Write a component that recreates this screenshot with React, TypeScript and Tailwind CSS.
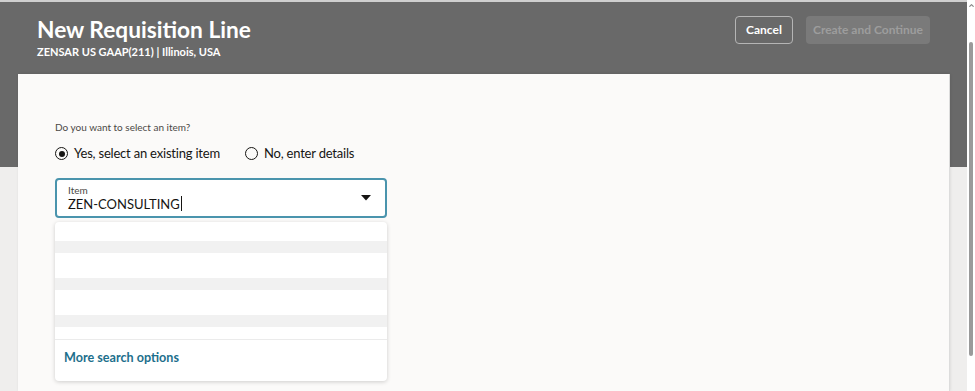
import { ChevronUp } from 'lucide-react';

const font = { fontFamily: 'Lato, "Noto Sans", sans-serif' };

const Radio = ({ checked, label }: { checked?: boolean; label: string }) => (
  <label className="flex items-center gap-[6px] text-[13px] tracking-[-0.2px] text-[#161513]">
    <span className="w-[13px] h-[13px] rounded-full border-[1.5px] border-[#161513] flex items-center justify-center">
      {checked && <span className="w-[6px] h-[6px] rounded-full bg-[#161513]" />}
    </span>
    {label}
  </label>
);

const App = () => {
  return (
    <div className="w-[975px] h-[391px] overflow-hidden flex bg-white" style={font}>
      <div className="flex-1 flex flex-col border-t-2 border-[#cfcfcf] bg-[#efeeed]">
        {/* Page header */}
        <div className="h-[165px] bg-[#696969] flex justify-between px-[37px] pt-[15px] shrink-0">
          <div className="text-white">
            <h1 className="text-[22.7px] font-bold leading-[26px]">New Requisition Line</h1>
            <p className="text-[11px] font-bold leading-[16px] mt-[1px]">ZENSAR US GAAP(211) | Illinois, USA</p>
          </div>
          <div className="flex items-start gap-[13px] mt-[-1px]">
            <button className="h-[28px] w-[58px] rounded-[4px] border border-[#b5b5b5] text-white text-[12px] font-bold">
              Cancel
            </button>
            <button className="h-[28px] w-[124px] rounded-[4px] bg-[#7a7a7a] text-[#9d9d9d] text-[12px] font-bold">
              Create and Continue
            </button>
          </div>
        </div>

        {/* Card */}
        <div className="flex-1 flex -mt-[93px]">
          <div className="ml-[18px] w-[931px] bg-[#fbfaf9] pl-[37px] pt-[46px] shadow-[1px_0_3px_rgba(0,0,0,0.12)]">
            <p className="text-[10px] text-[#4b4946] leading-[14px]">Do you want to select an item?</p>
            <div className="flex gap-[25px] mt-[10px]">
              <Radio checked label="Yes, select an existing item" />
              <Radio label="No, enter details" />
            </div>

            <div className="mt-[14px] w-[332px] h-[40px] rounded-[4px] border-2 border-[#4a94ad] bg-white flex items-center pl-[11px] pr-[14px]">
              <div className="flex-1 flex flex-col">
                <span className="text-[10px] leading-[12px] text-[#4b4946]">Item</span>
                <span className="text-[13px] leading-[16px] text-[#161513] flex items-center">
                  ZEN-CONSULTING
                  <span className="w-px h-[15px] bg-[#161513] ml-[1px]" />
                </span>
              </div>
              <svg width="10" height="6" viewBox="0 0 10 6">
                <path d="M0 0 L10 0 L5 5.5 Z" fill="#161513" />
              </svg>
            </div>

            <div className="mt-[4px] w-[332px] bg-white rounded-[4px] shadow-[0_1px_4px_rgba(0,0,0,0.18)] overflow-hidden">
              <div className="h-[19px]" />
              <div className="h-[12px] bg-[#f1f1f1]" />
              <div className="h-[25px]" />
              <div className="h-[12px] bg-[#f1f1f1]" />
              <div className="h-[25px]" />
              <div className="h-[12px] bg-[#f1f1f1]" />
              <div className="h-[12px]" />
              <div className="h-[42px] border-t border-[#ebebeb] pl-[9px] pb-[4px] flex items-center">
                <span className="text-[12.6px] font-bold text-[#1d6f8c]">More search options</span>
              </div>
            </div>
          </div>
          <div className="flex-1 border-l border-[#dcdcdc]" />
        </div>
      </div>

      {/* Scrollbar */}
      <div className="w-[8px] flex flex-col items-center bg-white">
        <ChevronUp className="w-[7px] h-[7px] mt-[2px] text-[#888]" strokeWidth={4} />
        <div className="w-[4px] h-[314px] mt-[33px] rounded-full bg-[#9a9a9a]" />
      </div>
    </div>
  );
};

export default App;
